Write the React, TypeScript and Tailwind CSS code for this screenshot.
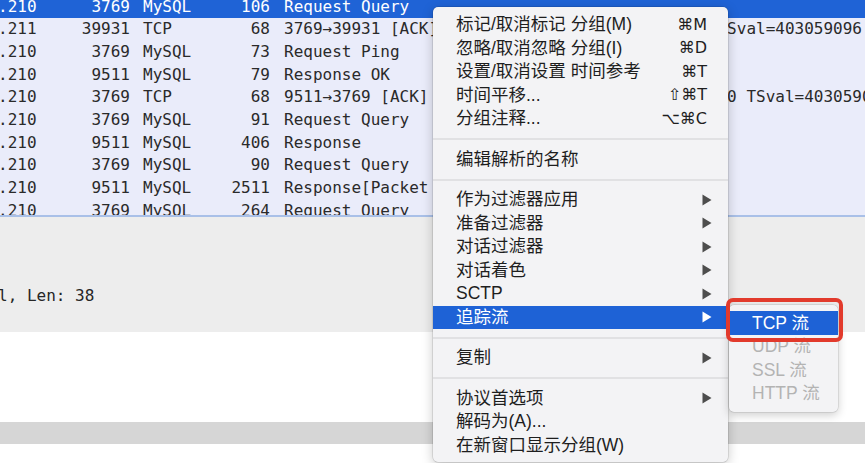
const rows = [
  [".210", "3769", "MySQL", "106", "Request Query"],
  [".211", "39931", "TCP", "68", "3769→39931 [ACK] Seq=1 Ack=39 Win=4094 Len=0 TSval=403059096 TSecr=403059090"],
  [".210", "3769", "MySQL", "73", "Request Ping"],
  [".210", "9511", "MySQL", "79", "Response OK"],
  [".210", "3769", "TCP", "68", "9511→3769 [ACK] Seq=12 Ack=2581 Win=40960 Len=0 TSval=403059096"],
  [".210", "3769", "MySQL", "91", "Request Query"],
  [".210", "9511", "MySQL", "406", "Response"],
  [".210", "3769", "MySQL", "90", "Request Query"],
  [".210", "9511", "MySQL", "2511", "Response[Packet size limited during capture]"],
  [".210", "3769", "MySQL", "264", "Request Query"],
];

type Item = { label?: string; key?: string; sub?: boolean; active?: boolean; sep?: boolean };

const menu: Item[] = [
  { label: "标记/取消标记 分组(M)", key: "⌘M" },
  { label: "忽略/取消忽略 分组(I)", key: "⌘D" },
  { label: "设置/取消设置 时间参考", key: "⌘T" },
  { label: "时间平移...", key: "⇧⌘T" },
  { label: "分组注释...", key: "⌥⌘C" },
  { sep: true },
  { label: "编辑解析的名称" },
  { sep: true },
  { label: "作为过滤器应用", sub: true },
  { label: "准备过滤器", sub: true },
  { label: "对话过滤器", sub: true },
  { label: "对话着色", sub: true },
  { label: "SCTP", sub: true },
  { label: "追踪流", sub: true, active: true },
  { sep: true },
  { label: "复制", sub: true },
  { sep: true },
  { label: "协议首选项", sub: true },
  { label: "解码为(A)..." },
  { label: "在新窗口显示分组(W)" },
];

const Arrow = ({ white }: { white?: boolean }) => (
  <svg width="10" height="12" viewBox="0 0 10 12" className="shrink-0">
    <path d="M0.5 0.5 L9.5 6 L0.5 11.5 Z" fill={white ? "#ffffff" : "#4d4d4d"} />
  </svg>
);

const App = () => {
  return (
    <div className="relative w-[865px] h-[463px] overflow-hidden bg-white">
      {/* Packet list */}
      <div className="h-[217px] overflow-hidden bg-[#eaecfa] border-b-2 border-[#a9c0e8] font-['DejaVu_Sans_Mono',monospace] text-[16px] text-[#2a2a2a]">
        <div className="-mt-[4.6px]">
          {rows.map((r, i) => (
            <div
              key={i}
              className={`flex items-center h-[22.67px] whitespace-nowrap ${i === 0 ? "bg-[#1f63d6] text-white" : ""}`}
            >
              <span className="w-[40px] shrink-0 -ml-[2px]">{r[0]}</span>
              <span className="w-[92px] shrink-0 text-right">{r[1]}</span>
              <span className="w-[62px] shrink-0 ml-[13px]">{r[2]}</span>
              <span className="w-[65px] shrink-0 text-right">{r[3]}</span>
              <span className="ml-[14px]">{r[4]}</span>
            </div>
          ))}
        </div>
      </div>

      {/* Details pane */}
      <div className="h-[115px] bg-[#ededed] pt-[68px] font-['DejaVu_Sans_Mono',monospace] text-[16px] leading-[22px] text-[#262626] whitespace-nowrap">
        <span className="-ml-[2px]">l, Len: 38</span>
      </div>

      {/* Bytes pane */}
      <div className="h-[90px] bg-white" />
      <div className="h-[22px] bg-[#d6d6d6]" />
      <div className="h-[19px] bg-white" />

      {/* Context menu */}
      <div className="absolute left-[433px] top-[7px] w-[295px] pt-[6px] pb-[5px] rounded-[5px] bg-[#f3f3f5] shadow-[0_3px_12px_rgba(0,0,0,0.22),0_0_0_0.5px_rgba(0,0,0,0.18)] font-['Liberation_Sans','Noto_Sans_CJK_SC','DejaVu_Sans',sans-serif] text-[17.5px] text-[#1e1e1e]">
        {menu.map((m, i) =>
          m.sep ? (
            <div key={i} className="h-[17px] flex items-center">
              <div className="w-full h-[2px] bg-[#e1e1e3]" />
            </div>
          ) : (
            <div
              key={i}
              className={`h-[23.5px] flex items-center pl-[23px] pr-[16px] whitespace-nowrap ${m.active ? "bg-[#1e62d6] text-white" : ""}`}
            >
              <span className="flex-1 leading-none">{m.label}</span>
              {m.key && <span className="pr-[5px] font-['DejaVu_Sans','Noto_Sans_CJK_SC',sans-serif] text-[16px] leading-none">{m.key}</span>}
              {m.sub && <Arrow white={m.active} />}
            </div>
          )
        )}
      </div>

      {/* Submenu */}
      <div className="absolute left-[729px] top-[305px] w-[109px] pt-[6px] pb-[7px] rounded-[5px] bg-[#f3f3f5] shadow-[0_3px_10px_rgba(0,0,0,0.2),0_0_0_0.5px_rgba(0,0,0,0.15)] font-['Liberation_Sans','Noto_Sans_CJK_SC',sans-serif] text-[17.5px]">
        <div className="h-[23.5px] flex items-center pl-[23px] bg-[#1e62d6] text-white whitespace-nowrap">TCP 流</div>
        <div className="h-[23.5px] flex items-center pl-[23px] text-[#b3b3b3] whitespace-nowrap">UDP 流</div>
        <div className="h-[23.5px] flex items-center pl-[23px] text-[#b3b3b3] whitespace-nowrap">SSL 流</div>
        <div className="h-[23.5px] flex items-center pl-[23px] text-[#b3b3b3] whitespace-nowrap">HTTP 流</div>
      </div>

      {/* Red annotation box */}
      <div className="absolute left-[726px] top-[298px] w-[117px] h-[44px] rounded-[7px] border-[4px] border-[#e23a2c]" />
    </div>
  );
};

export default App;
